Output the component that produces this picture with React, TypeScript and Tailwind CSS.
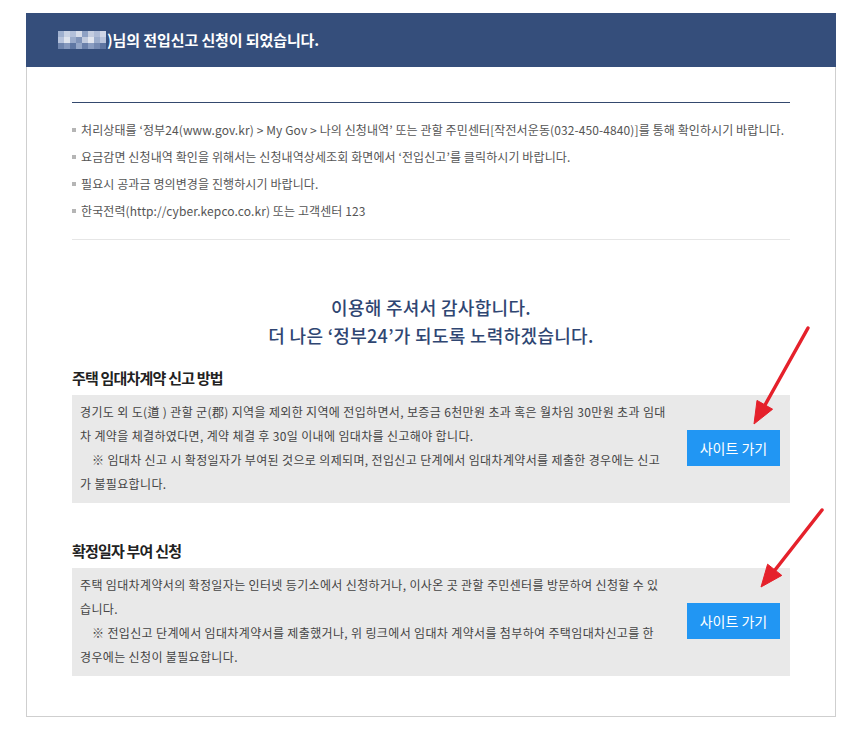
const NOTICES = [
  "처리상태를 ‘정부24(www.gov.kr) > My Gov > 나의 신청내역’ 또는 관할 주민센터[작전서운동(032-450-4840)]를 통해 확인하시기 바랍니다.",
  "요금감면 신청내역 확인을 위해서는 신청내역상세조회 화면에서 ‘전입신고’를 클릭하시기 바랍니다.",
  "필요시 공과금 명의변경을 진행하시기 바랍니다.",
  "한국전력(http://cyber.kepco.co.kr) 또는 고객센터 123",
];

type Line = { text: string; indent?: boolean };

const SECTIONS: { title: string; lines: Line[] }[] = [
  {
    title: "주택 임대차계약 신고 방법",
    lines: [
      { text: "경기도 외 도(道 ) 관할 군(郡) 지역을 제외한 지역에 전입하면서, 보증금 6천만원 초과 혹은 월차임 30만원 초과 임대" },
      { text: "차 계약을 체결하였다면, 계약 체결 후 30일 이내에 임대차를 신고해야 합니다." },
      { text: "※ 임대차 신고 시 확정일자가 부여된 것으로 의제되며, 전입신고 단계에서 임대차계약서를 제출한 경우에는 신고", indent: true },
      { text: "가 불필요합니다." },
    ],
  },
  {
    title: "확정일자 부여 신청",
    lines: [
      { text: "주택 임대차계약서의 확정일자는 인터넷 등기소에서 신청하거나, 이사온 곳 관할 주민센터를 방문하여 신청할 수 있" },
      { text: "습니다." },
      { text: "※ 전입신고 단계에서 임대차계약서를 제출했거나, 위 링크에서 임대차 계약서를 첨부하여 주택임대차신고를 한", indent: true },
      { text: "경우에는 신청이 불필요합니다." },
    ],
  },
];

// pixelated name block in the header
const MOSAIC = [
  ["bg-[#9fb0cf]", "bg-[#c9d2e4]", "bg-[#b3c0da]", "bg-[#d6dcea]", "bg-[#8ea1c4]", "bg-[#c4cde0]", "bg-[#aebbd6]", "bg-[#cfd6e6]"],
  ["bg-[#b7c3dc]", "bg-[#dfe4ee]", "bg-[#9aabcb]", "bg-[#7f93b9]", "bg-[#c0cade]", "bg-[#e2e6ef]", "bg-[#9cadcc]", "bg-[#b9c4dc]"],
  ["bg-[#6e84ad]", "bg-[#8598bd]", "bg-[#5f77a3]", "bg-[#94a6c7]", "bg-[#6a80aa]", "bg-[#8a9dc1]", "bg-[#7489b1]", "bg-[#5d74a0]"],
];

function Arrows() {
  return (
    <svg className="pointer-events-none absolute left-0 top-0" width="856" height="730">
      <g fill="#e5212b" stroke="#e5212b">
        <line x1="808" y1="328" x2="765" y2="405" strokeWidth="3.5" strokeLinecap="round" />
        <polygon points="754,424 757,400.4 772.6,409.2" strokeWidth="1" strokeLinejoin="round" />
        <line x1="822" y1="510" x2="775" y2="570" strokeWidth="3.5" strokeLinecap="round" />
        <polygon points="761,587 767.6,564.2 781.8,575.4" strokeWidth="1" strokeLinejoin="round" />
      </g>
    </svg>
  );
}

export default function App() {
  return (
    <div
      className="relative min-h-[730px] w-[856px] bg-white pt-[13px]"
      style={{ fontFamily: '"Noto Sans CJK KR", "Noto Sans", sans-serif' }}
    >
      <div className="ml-[26px] w-[810px]">
        <div className="flex h-[54px] items-center bg-[#354e7b] pl-[32px]">
          <div className="flex flex-col">
            {MOSAIC.map((row, i) => (
              <div key={i} className="flex">
                {row.map((c, j) => (
                  <span key={j} className={`h-[6px] w-[6px] ${c}`} />
                ))}
              </div>
            ))}
          </div>
          <span className="ml-[1px] text-[15px] font-bold tracking-[-0.1px] text-white">
            )님의 전입신고 신청이 되었습니다.
          </span>
        </div>

        <div className="border-x border-b border-[#cfcfcf] px-[45px] pb-[40px] pt-[35px]">
          <div className="border-t border-[#34496e]" />
          <ul className="border-b border-[#e6e6e6] pb-[15px] pt-[13px]">
            {NOTICES.map((n) => (
              <li key={n} className="flex items-center text-[12px] leading-[27px] tracking-[0.1px] text-[#555]">
                <span className="mr-[5px] h-[4px] w-[4px] shrink-0 bg-[#b5b5b5]" />
                {n}
              </li>
            ))}
          </ul>

          <div className="mt-[53px] text-center text-[18px] font-medium leading-[28px] tracking-[0.3px] text-[#2f4672]">
            <p>이용해 주셔서 감사합니다.</p>
            <p>더 나은 ‘정부24’가 되도록 노력하겠습니다.</p>
          </div>

          {SECTIONS.map((s, i) => (
            <section key={s.title} className={i === 0 ? "mt-[19px]" : "mt-[38px]"}>
              <h3 className="text-[15px] font-bold leading-[20px] tracking-[-0.8px] text-[#222]">{s.title}</h3>
              <div className="mt-[7px] flex items-center bg-[#e9e9e9] pb-[7px] pl-[8px] pr-[10px] pt-[5px]">
                <div className="flex-1 text-[12px] leading-[24px] tracking-[0.35px] text-[#444]">
                  {s.lines.map((l) => (
                    <div key={l.text} className={`whitespace-nowrap ${l.indent ? "pl-[12px]" : ""}`}>
                      {l.text}
                    </div>
                  ))}
                </div>
                <button className="h-[36px] w-[93px] shrink-0 bg-[#2196f3] text-[14px] text-white">
                  사이트 가기
                </button>
              </div>
            </section>
          ))}
        </div>
      </div>
      <Arrows />
    </div>
  );
}
